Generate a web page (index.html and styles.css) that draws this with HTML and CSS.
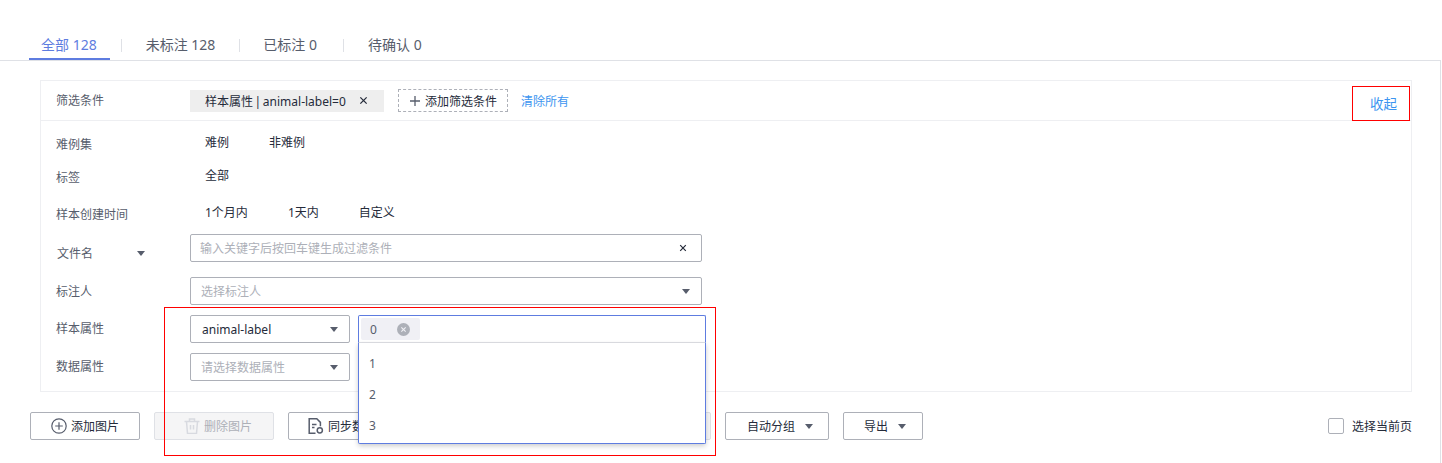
FILE: index.html
```html
<!DOCTYPE html>
<html lang="en">
<head>
    <meta charset="UTF-8">
    <meta name="viewport" content="width=device-width, initial-scale=1.0">
    <title>样本列表</title>
    <link rel="stylesheet" href="styles.css">
</head>
<body>
    <div class="tabs">
        <a class="tab active">全部 128</a>
        <span class="tab-sep"></span>
        <a class="tab">未标注 128</a>
        <span class="tab-sep"></span>
        <a class="tab tab-wide">已标注 0</a>
        <span class="tab-sep"></span>
        <a class="tab">待确认 0</a>
    </div>

    <div class="content">
        <div class="panel">
            <div class="panel-head">
                <span class="row-label head-label">筛选条件</span>
                <span class="chip">样本属性 | animal-label=0
                    <svg class="chip-close" viewBox="0 0 10 10"><path d="M1.5 1.5l7 7M8.5 1.5l-7 7"/></svg>
                </span>
                <span class="add-filter">
                    <svg class="plus" viewBox="0 0 10 10"><path d="M5 0v10M0 5h10"/></svg>
                    添加筛选条件
                </span>
                <a class="link clear-all">清除所有</a>
                <a class="link collapse">收起</a>
            </div>

            <div class="panel-body">
                <div class="row row-options">
                    <span class="row-label">难例集</span>
                    <div class="options"><span>难例</span><span>非难例</span></div>
                </div>
                <div class="row row-options gap-13">
                    <span class="row-label">标签</span>
                    <div class="options"><span>全部</span></div>
                </div>
                <div class="row row-options gap-17">
                    <span class="row-label">样本创建时间</span>
                    <div class="options"><span>1个月内</span><span>1天内</span><span>自定义</span></div>
                </div>
                <div class="row gap-12">
                    <span class="row-label label-file">文件名 <i class="caret"></i></span>
                    <div class="field field-wide">
                        <span class="placeholder">输入关键字后按回车键生成过滤条件</span>
                        <svg class="field-close" viewBox="0 0 10 10"><path d="M1.5 1.5l7 7M8.5 1.5l-7 7"/></svg>
                    </div>
                </div>
                <div class="row gap-15">
                    <span class="row-label">标注人</span>
                    <div class="field field-wide">
                        <span class="placeholder shifted">选择标注人</span>
                        <i class="caret"></i>
                    </div>
                </div>
                <div class="row gap-10">
                    <span class="row-label label-up">样本属性</span>
                    <div class="field field-small">
                        <span class="shifted">animal-label</span>
                        <i class="caret"></i>
                    </div>
                    <div class="multi">
                        <div class="multi-input">
                            <span class="tag">0
                                <svg class="tag-close" viewBox="0 0 12 12"><circle cx="6" cy="6" r="6"/><path d="M4 4l4 4M8 4l-4 4"/></svg>
                            </span>
                        </div>
                        <ul class="dropdown">
                            <li>1</li>
                            <li>2</li>
                            <li>3</li>
                        </ul>
                    </div>
                </div>
                <div class="row gap-10">
                    <span class="row-label label-up">数据属性</span>
                    <div class="field field-small">
                        <span class="placeholder">请选择数据属性</span>
                        <i class="caret"></i>
                    </div>
                </div>
            </div>
        </div>

        <div class="toolbar">
            <button class="btn btn-add">
                <svg class="btn-icon" viewBox="0 0 16 16"><circle cx="8" cy="8" r="7.2"/><path d="M8 4.2v7.6M4.2 8h7.6"/></svg>
                添加图片
            </button>
            <button class="btn btn-delete" disabled>
                <svg class="btn-icon" viewBox="0 0 16 16"><path d="M0.5 3.5h15M5.5 3.5V1h5v2.5M2.5 3.5l1 12h9l1-12M6.5 7v4.5M9.5 7v4.5"/></svg>
                删除图片
            </button>
            <button class="btn btn-sync">
                <svg class="btn-icon sync-icon" viewBox="0 0 16 16"><path d="M7.5 15.2H1.2V.8h7.6l3.6 3.6v3.8M4 6.5h4.5M4 9.5h2.5"/><circle cx="11.8" cy="12.3" r="2.6"/></svg>
                同步数据源
            </button>
            <button class="btn btn-hidden" disabled></button>
            <button class="btn btn-group">自动分组 <i class="caret"></i></button>
            <button class="btn btn-export">导出 <i class="caret"></i></button>
            <label class="select-page"><span class="checkbox"></span>选择当前页</label>
        </div>

        <div class="mark mark-collapse"></div>
        <div class="mark mark-attr"></div>
    </div>
</body>
</html>
```

FILE: styles.css
```css
* {
    box-sizing: border-box;
}
html, body {
    height: 100%;
    margin: 0;
    overflow: hidden;
}
body {
    font-family: "Noto Sans", "Noto Sans CJK SC", sans-serif;
    font-size: 12px;
    color: #252b3a;
    background: #fff;
}

/* tabs */
.tabs {
    display: flex;
    align-items: center;
    height: 60px;
    padding: 30px 0 0 29px;
}
.tab {
    height: 30px;
    line-height: 30px;
    padding: 0 13px 0 12px;
    font-size: 14px;
    color: #575d6c;
}
.tab.active {
    color: #5e7ce0;
    border-bottom: 2px solid #5e7ce0;
}
.tab-wide {
    padding-right: 15px;
}
.tab-sep {
    width: 1px;
    height: 13px;
    margin: 0 12px 0 11px;
    background: #dfe1e6;
}
.tab-sep:nth-child(4) {
    margin-right: 11px;
}

.content {
    position: relative;
    width: 1441px;
    height: calc(100% - 60px);
    border-top: 1px solid #dfe1e6;
    border-right: 1px solid #dfe1e6;
    padding: 19px 28px 0 40px;
}

/* filter panel */
.panel {
    height: 312px;
    border: 1px solid #eeeff2;
}
.panel-head {
    display: flex;
    align-items: center;
    height: 40px;
    padding-left: 15px;
    border-bottom: 1px solid #eeeff2;
}
.row-label {
    width: 134px;
    flex-shrink: 0;
    color: #575d6c;
}
.head-label {
    margin-top: -2px;
}
.chip {
    display: flex;
    align-items: center;
    width: 194px;
    height: 22px;
    padding-left: 15px;
    word-spacing: -1.5px;
    background: #eeeeee;
}
.chip-close {
    width: 9px;
    height: 9px;
    margin-left: 13px;
    fill: none;
    stroke: #252b3a;
    stroke-width: 1.4;
}
.add-filter {
    display: flex;
    align-items: center;
    width: 110px;
    height: 23px;
    margin-left: 14px;
    padding-left: 11px;
    border: 1px dashed #adb0b8;
}
.plus {
    width: 10px;
    height: 10px;
    margin-right: 5px;
    fill: none;
    stroke: #575d6c;
    stroke-width: 1.3;
}
.link {
    color: #3c95f0;
}
.clear-all {
    margin-left: 13px;
}
.collapse {
    margin-left: auto;
    margin-right: 14px;
    padding-top: 4px;
    font-size: 13.5px;
}

.panel-body {
    padding-top: 11px;
}
.row {
    display: flex;
    align-items: center;
    height: 28px;
    padding-left: 15px;
}
.row-options {
    height: 20px;
}
.row-options .row-label {
    padding-top: 4px;
}
.options {
    display: flex;
    padding-left: 15px;
    gap: 40px;
}
.gap-10 { margin-top: 10px; }
.gap-12 { margin-top: 12px; }
.gap-13 { margin-top: 13px; }
.gap-15 { margin-top: 15px; }
.gap-17 { margin-top: 17px; }

.label-file {
    display: flex;
    align-items: center;
    padding: 10px 0 0 1px;
}
.label-file .caret {
    margin-left: 44px;
}
.label-up {
    margin-top: -2px;
}

/* inputs */
.field {
    display: flex;
    align-items: center;
    justify-content: space-between;
    height: 28px;
    padding: 0 11px 0 10px;
    border: 1px solid #adb0b8;
    border-radius: 2px;
}
.field-wide {
    width: 512px;
    padding-left: 9px;
}
.field-small {
    width: 160px;
}
.placeholder {
    color: #adb0b8;
}
.shifted {
    margin-left: 1px;
}
.field-close {
    width: 8px;
    height: 8px;
    margin-right: 3px;
    fill: none;
    stroke: #252b3a;
    stroke-width: 1.5;
}
.caret {
    display: inline-block;
    width: 0;
    height: 0;
    border-left: 4.5px solid transparent;
    border-right: 4.5px solid transparent;
    border-top: 5px solid #575d6c;
}

.multi {
    position: relative;
    width: 348px;
    margin-left: 8px;
}
.multi-input {
    height: 28px;
    padding: 2px;
    border: 1px solid #5e7ce0;
    border-bottom-color: #dfe1e6;
    border-radius: 2px 2px 0 0;
}
.tag {
    display: flex;
    align-items: center;
    width: 59px;
    height: 22px;
    padding-left: 9px;
    color: #575d6c;
    background: #f0f0f5;
    border-radius: 2px;
}
.tag-close {
    width: 13px;
    height: 13px;
    margin-left: 20px;
    fill: #adb0b8;
    stroke: #f0f0f5;
    stroke-width: 1;
}
.tag-close circle {
    stroke: none;
}
.dropdown {
    position: absolute;
    top: 28px;
    left: 0;
    z-index: 2;
    width: 348px;
    height: 101px;
    margin: 0;
    padding: 5px 0 0 10px;
    list-style: none;
    background: #fff;
    border: 1px solid #5e7ce0;
    border-top: none;
    border-radius: 0 0 2px 2px;
    box-shadow: 0 2px 5px rgba(0, 0, 0, 0.2);
}
.dropdown li {
    height: 31px;
    line-height: 31px;
    color: #575d6c;
}

/* toolbar */
.toolbar {
    display: flex;
    align-items: center;
    margin: 20px 0 0 -10px;
}
.btn {
    display: flex;
    align-items: center;
    justify-content: center;
    height: 28px;
    padding: 0;
    margin-right: 14px;
    font: inherit;
    color: #252b3a;
    background: #fff;
    border: 1px solid #adb0b8;
    border-radius: 2px;
}
.btn[disabled] {
    color: #adb0b8;
    background: #f5f5f6;
    border-color: #dfe1e6;
}
.btn-icon {
    width: 16px;
    height: 16px;
    margin-right: 4px;
    fill: none;
    stroke: #575d6c;
    stroke-width: 1.2;
}
.btn-add { width: 110px; }
.btn-delete {
    width: 120px;
    justify-content: flex-start;
    padding-left: 29px;
}
.btn-delete .btn-icon {
    stroke: #d8dae0;
    stroke-width: 1.5;
}
.btn-sync {
    width: 130px;
    justify-content: flex-start;
    padding-left: 19px;
}
.sync-icon {
    stroke-width: 1.5;
}
.btn-hidden { width: 279px; }
.btn-group {
    width: 104px;
    justify-content: flex-start;
    padding-left: 21px;
}
.btn-group .caret,
.btn-export .caret {
    margin-left: 10px;
}
.btn-export {
    width: 80px;
    justify-content: flex-start;
    padding-left: 20px;
    margin: 0;
}
.select-page {
    display: flex;
    align-items: center;
    margin-left: auto;
}
.checkbox {
    width: 16px;
    height: 16px;
    margin-right: 8px;
    border: 1px solid #adb0b8;
    border-radius: 2px;
}

/* red annotation boxes drawn over the page */
.mark {
    position: absolute;
    border: 1px solid #ff0000;
    pointer-events: none;
}
.mark-collapse {
    top: 25px;
    left: 1352px;
    width: 58px;
    height: 35px;
}
.mark-attr {
    top: 246px;
    left: 164px;
    width: 552px;
    height: 149px;
}
```
